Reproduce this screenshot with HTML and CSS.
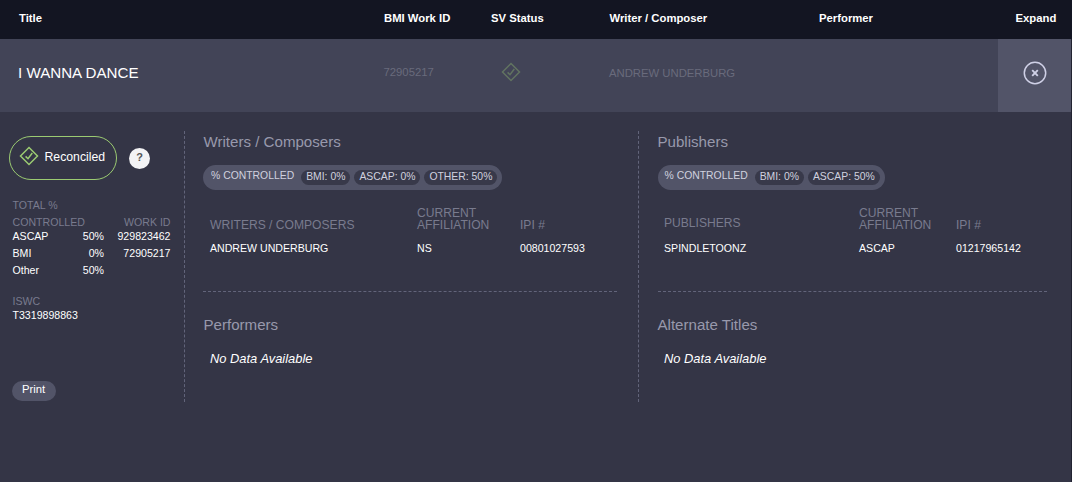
FILE: index.html
```html
<!DOCTYPE html>
<html lang="en">
<head>
  <meta charset="utf-8">
  <title>Song Search</title>
  <link rel="stylesheet" href="styles.css">
</head>
<body>
  <div class="results">
    <div class="results-head">
      <div>Title</div>
      <div>BMI Work ID</div>
      <div>SV Status</div>
      <div>Writer / Composer</div>
      <div>Performer</div>
      <div>Expand</div>
    </div>

    <div class="result-row">
      <div class="song-title">I WANNA DANCE</div>
      <div class="faded work-id">72905217</div>
      <div class="faded status">
        <svg class="diamond" viewBox="0 0 20 20" width="20" height="20">
          <path d="M10 1.5 18.5 10 10 18.5 1.5 10Z"/>
          <path d="M6.6 10.4 9 12.7 13.3 7"/>
        </svg>
      </div>
      <div class="faded writer">ANDREW UNDERBURG</div>
      <div></div>
      <button class="expand" aria-label="Close">
        <svg viewBox="0 0 24 24" width="24" height="24">
          <circle cx="12" cy="12" r="10.7"/>
          <path d="M9.2 9.2 14.8 14.8M14.8 9.2 9.2 14.8"/>
        </svg>
      </button>
    </div>

    <div class="details">
      <div class="summary">
        <div class="badges">
          <div class="reconciled">
            <svg class="diamond" viewBox="0 0 20 20" width="20" height="20">
              <path d="M10 1.5 18.5 10 10 18.5 1.5 10Z"/>
              <path d="M6.6 10.4 9 12.7 13.3 7"/>
            </svg>
            <span>Reconciled</span>
          </div>
          <div class="help">?</div>
        </div>

        <table class="totals">
          <tr><th colspan="2">TOTAL %<br>CONTROLLED</th><th>WORK ID</th></tr>
          <tr><td>ASCAP</td><td>50%</td><td>929823462</td></tr>
          <tr><td>BMI</td><td>0%</td><td>72905217</td></tr>
          <tr><td>Other</td><td>50%</td><td></td></tr>
        </table>

        <div class="iswc">
          <div class="label">ISWC</div>
          <div>T3319898863</div>
        </div>

        <button class="print">Print</button>
      </div>

      <div class="column writers">
        <div class="block top">
          <h2>Writers / Composers</h2>
          <div class="controlled">
            <span class="controlled-label">% CONTROLLED</span>
            <span class="chip">BMI: 0%</span>
            <span class="chip">ASCAP: 0%</span>
            <span class="chip">OTHER: 50%</span>
          </div>
          <div class="people">
            <div class="th">WRITERS / COMPOSERS</div>
            <div class="th">CURRENT AFFILIATION</div>
            <div class="th">IPI #</div>
            <div>ANDREW UNDERBURG</div>
            <div>NS</div>
            <div>00801027593</div>
          </div>
        </div>
        <div class="block">
          <h2>Performers</h2>
          <p class="empty">No Data Available</p>
        </div>
      </div>

      <div class="column publishers">
        <div class="block top">
          <h2>Publishers</h2>
          <div class="controlled">
            <span class="controlled-label">% CONTROLLED</span>
            <span class="chip">BMI: 0%</span>
            <span class="chip">ASCAP: 50%</span>
          </div>
          <div class="people">
            <div class="th raised">PUBLISHERS</div>
            <div class="th">CURRENT AFFILIATION</div>
            <div class="th">IPI #</div>
            <div>SPINDLETOONZ</div>
            <div>ASCAP</div>
            <div>01217965142</div>
          </div>
        </div>
        <div class="block">
          <h2>Alternate Titles</h2>
          <p class="empty">No Data Available</p>
        </div>
      </div>
    </div>
  </div>
</body>
</html>
```
FILE: styles.css
```css
* {
  box-sizing: border-box;
}

body {
  margin: 0;
  background-color: #343546;
  color: #fff;
  font-family: "Liberation Sans", Arial, sans-serif;
  font-size: 10.6px;
}

button {
  border: 0;
  padding: 0;
  color: inherit;
  font-family: inherit;
}

svg {
  display: block;
  fill: none;
}

.results {
  height: 482px;
  border-right: 1px solid #222331;
}

.results-head,
.result-row {
  display: grid;
  grid-template-columns: 365px 107px 118.5px 209.5px 198px 73px;
}

.results-head {
  height: 39px;
  background-color: #131522;
  margin-right: -1px;
  font-size: 11.3px;
  font-weight: bold;
  line-height: 37px;
}

.results-head div {
  padding-left: 19px;
}

.results-head div:last-child {
  padding-left: 17.5px;
}

.result-row {
  height: 73px;
  background-color: #424457;
  align-items: center;
}

.result-row > div {
  padding: 0 0 7px 18px;
}

.result-row .song-title {
  font-size: 15.15px;
}

.result-row .faded {
  color: #696b7c;
  font-size: 11.3px;
}

.result-row .work-id {
  padding-left: 18.5px;
}

.result-row .status {
  padding-left: 28.5px;
}

.result-row .writer {
  padding-bottom: 5px;
  padding-left: 18.5px;
}

.diamond {
  stroke: #9bcb72;
  stroke-width: 1.5;
}

.status .diamond {
  opacity: 0.35;
}

.expand {
  height: 73px;
  background-color: #525468;
  display: flex;
  justify-content: center;
  padding-top: 22px;
}

.expand svg {
  stroke: #cfd0e6;
  stroke-width: 1.5;
}

.expand path {
  stroke-width: 1.9;
}

.details {
  display: grid;
  grid-template-columns: 185px 454px 1fr;
  height: 271px;
  margin-top: 19px;
}

.summary {
  padding: 5px 13px 0 9px;
  border-right: 1px dashed #62647a;
}

.badges {
  display: flex;
  align-items: center;
  gap: 12px;
}

.reconciled {
  display: flex;
  align-items: center;
  gap: 5.5px;
  width: 108px;
  height: 44px;
  padding: 0 0 3px 9px;
  border: 1px solid #9bcb72;
  border-radius: 22px;
  font-size: 12.25px;
}

.reconciled .diamond {
  margin-bottom: 2px;
}

.help {
  width: 21px;
  height: 21px;
  border-radius: 50%;
  background-color: #f3f3f5;
  color: #555;
  font-size: 11px;
  font-weight: bold;
  line-height: 19px;
  text-align: center;
}

.totals {
  width: 158px;
  margin: 17px 0 0 3.5px;
  border-collapse: collapse;
  line-height: 17px;
}

.totals th,
.totals td {
  padding: 0;
  text-align: right;
}

.totals td {
  height: 17px;
  padding-bottom: 6px;
  line-height: 11px;
}

.totals th {
  color: #797b8e;
  font-weight: normal;
  vertical-align: bottom;
}

.totals th:first-child,
.totals td:first-child {
  text-align: left;
}

.totals td:nth-child(2) {
  width: 44px;
}

.totals td:nth-child(3) {
  width: 66.5px;
}

.iswc {
  margin: 12px 0 0 3.5px;
  line-height: 14px;
}

.iswc .label {
  color: #797b8e;
}

.print {
  width: 44px;
  height: 20px;
  margin: 59px 0 0 3px;
  padding: 0 1px 4px 0;
  border-radius: 10px;
  background-color: #525468;
  font-size: 11.3px;
}

.writers {
  padding: 0 21px 0 18px;
  border-right: 1px dashed #62647a;
}

.publishers {
  padding: 0 24px 0 18.5px;
}

.block.top {
  height: 161px;
  border-bottom: 1px dashed #62647a;
}

h2 {
  margin: 0;
  padding-top: 2px;
  color: #9899ac;
  font-size: 15.1px;
  font-weight: normal;
  line-height: 18px;
}

.writers h2 {
  padding-left: 0.5px;
}

.block:not(.top) h2 {
  padding-top: 24px;
}

.controlled {
  display: inline-flex;
  height: 25px;
  margin-top: 14px;
  padding: 5px 5px 5px 8px;
  border-radius: 13px;
  background-color: #525468;
  color: #d0d1df;
  font-size: 10.4px;
}

.publishers .controlled {
  padding-left: 7px;
}

.controlled-label {
  margin-right: 3px;
  line-height: 12px;
}

.chip {
  height: 15px;
  margin-left: 4px;
  padding: 0 5px;
  border-radius: 8px;
  background-color: #38394a;
  line-height: 14px;
}

.people {
  display: grid;
  grid-template-columns: 207px 103px 1fr;
  align-items: end;
  margin-top: 17px;
  padding-left: 7px;
}

.publishers .people {
  grid-template-columns: 195px 97px 1fr;
}

.people div {
  margin-top: 11px;
  line-height: 12px;
}

.people .th {
  width: min-content;
  min-width: 80px;
  margin-top: 0;
  color: #797b8e;
  font-size: 12.1px;
}

.people .th:first-child {
  width: auto;
}

.people .raised {
  padding-bottom: 2px;
}

.empty {
  margin: 17px 0 0 7px;
  font-size: 12.9px;
  font-style: italic;
  line-height: 15px;
}

.publishers .people,
.publishers .empty {
  margin-left: 0;
  padding-left: 6.5px;
}
```
